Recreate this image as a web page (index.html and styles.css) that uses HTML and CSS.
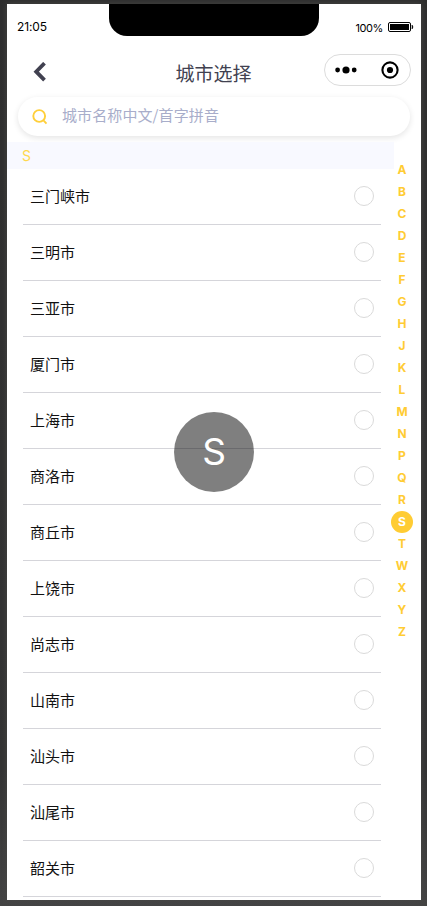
FILE: index.html
```
<!DOCTYPE html>
<html lang="zh-CN">
<head>
<title>城市选择</title>
<meta charset="utf-8">
<link rel="stylesheet" href="styles.css">
</head>
<body>
<div id="phone">
    <div class="status">
        <span class="time">21:05</span>
        <div class="notch"></div>
        <div class="power">
            <span>100%</span>
            <svg width="26" height="10" viewBox="0 0 26 10">
                <rect x="0.5" y="0.5" width="22" height="9" rx="1.5" fill="none" stroke="#000"/>
                <rect x="2" y="2" width="19" height="6" fill="#000"/>
                <path d="M24 3q2 2 0 4z" fill="#000" stroke="#000" stroke-width="0.5"/>
            </svg>
        </div>
    </div>

    <div class="nav">
        <svg class="back" width="14" height="20" viewBox="0 0 14 20">
            <path d="M11.5 1.2L3.2 9.7l8.3 8.5" fill="none" stroke="#414150" stroke-width="3.8"/>
        </svg>
        <h1>城市选择</h1>
        <div class="capsule">
            <svg width="22" height="8" viewBox="0 0 22 8">
                <circle cx="2.6" cy="4" r="2.4"/>
                <circle cx="11" cy="4" r="3.6"/>
                <circle cx="19.2" cy="4" r="2.4"/>
            </svg>
            <svg width="18" height="18" viewBox="0 0 18 18">
                <circle cx="9" cy="9" r="7.6" fill="none" stroke="#000" stroke-width="2.1"/>
                <circle cx="9" cy="9" r="3.1"/>
            </svg>
        </div>
    </div>

    <div class="search">
        <svg width="16" height="16" viewBox="0 0 16 16" fill="none" stroke="#ffcf3a" stroke-width="1.9">
            <circle cx="7.2" cy="7" r="5.9"/>
            <path d="M11.7 11.7l2.8 2.9"/>
        </svg>
        <span>城市名称中文/首字拼音</span>
    </div>

    <div class="content">
        <div class="list">
            <h2>S</h2>
            <ul>
                <li>三门峡市<i></i></li>
                <li>三明市<i></i></li>
                <li>三亚市<i></i></li>
                <li>厦门市<i></i></li>
                <li>上海市<i></i></li>
                <li>商洛市<i></i></li>
                <li>商丘市<i></i></li>
                <li>上饶市<i></i></li>
                <li>尚志市<i></i></li>
                <li>山南市<i></i></li>
                <li>汕头市<i></i></li>
                <li>汕尾市<i></i></li>
                <li>韶关市<i></i></li>
            </ul>
        </div>
        <div class="letters">
            <b>A</b>
            <b>B</b>
            <b>C</b>
            <b>D</b>
            <b>E</b>
            <b>F</b>
            <b>G</b>
            <b>H</b>
            <b>J</b>
            <b>K</b>
            <b>L</b>
            <b>M</b>
            <b>N</b>
            <b>P</b>
            <b>Q</b>
            <b>R</b>
            <b class="current">S</b>
            <b>T</b>
            <b>W</b>
            <b>X</b>
            <b>Y</b>
            <b>Z</b>
        </div>
    </div>

    <div class="toast">S</div>
</div>
</body>
</html>
```
FILE: styles.css
```
* {
    box-sizing: border-box;
}
body {
    margin: 0;
    padding: 4px 6px 6px 7px;
    height: 906px;
    overflow: hidden;
    background: linear-gradient(#2e2e2e, #333 85%, #444);
    font-family: "Liberation Sans", "Noto Sans CJK SC", sans-serif;
}
#phone {
    position: relative;
    width: 414px;
    height: 896px;
    overflow: hidden;
    background: white;
    box-shadow: 0 0 6px #484846;
}

/* status bar */
.status {
    display: flex;
    justify-content: space-between;
    height: 45px;
    font-family: Inter, sans-serif;
}
.time {
    width: 102px;
    padding-left: 10px;
    font-size: 12px;
    line-height: 46px;
    letter-spacing: -0.1px;
}
.notch {
    width: 210px;
    height: 32px;
    background: black;
    border-radius: 0 0 18px 18px;
}
.power {
    display: flex;
    align-items: center;
    justify-content: flex-end;
    gap: 5px;
    width: 102px;
    height: 46px;
    padding-right: 7px;
    font-size: 11px;
    letter-spacing: -0.4px;
}
.power span {
    padding-top: 2px;
}

/* title bar */
.nav {
    display: flex;
    align-items: center;
    height: 48px;
    padding: 0 10px 4px 26px;
}
.back {
    margin-top: 2px;
}
.nav h1 {
    flex: 1;
    margin: 7px 0 0 56px;
    text-align: center;
    font-size: 19px;
    font-weight: normal;
    line-height: 28px;
    color: #414150;
}
.capsule {
    display: flex;
    align-items: center;
    justify-content: space-between;
    width: 87px;
    height: 32px;
    margin-bottom: 2px;
    padding: 0 11px 0 10px;
    border: 1px solid #dcdcdc;
    border-radius: 16px;
}

.search {
    display: flex;
    align-items: center;
    gap: 14px;
    height: 39px;
    margin: 0 11px 6px;
    padding-left: 14px;
    border-radius: 20px;
    box-shadow: 0 2px 6px rgba(0, 0, 0, 0.11);
    font-family: "Noto Sans CJK SC", sans-serif;
    font-size: 15px;
    line-height: 20px;
    letter-spacing: 0.1px;
    color: #a8adca;
}
.search span {
    padding-bottom: 3px;
}

/* cities */
.content {
    display: flex;
}
.list {
    width: 387px;
}
.list h2 {
    height: 27px;
    margin: 0;
    padding-left: 15px;
    background: #f8f9ff;
    font: 14px/27px Inter, sans-serif;
    color: #ffd84d;
}
.list ul {
    margin: 0 13px 0 16px;
    padding: 0;
    list-style: none;
}
.list li {
    display: flex;
    align-items: center;
    justify-content: space-between;
    height: 56px;
    padding: 0 7.5px 2px 7px;
    border-bottom: 1px solid #d5d5da;
    font-size: 15px;
    color: #111;
}
.list i {
    width: 20px;
    height: 20px;
    margin-top: 1px;
    border: 1px solid #dadada;
    border-radius: 50%;
}

/* letter index */
.letters {
    display: flex;
    flex-direction: column;
    width: 22px;
    margin: 17px 0 0 -3px;
}
.letters b {
    height: 22px;
    border-radius: 50%;
    text-align: center;
    font: bold 12px/22px Inter, sans-serif;
    color: #ffcc33;
}
.letters .current {
    background: #ffcc33;
    color: white;
}

/* big letter over the list */
.toast {
    position: absolute;
    top: 408px;
    left: 167px;
    width: 80px;
    height: 80px;
    border-radius: 50%;
    background: rgba(0, 0, 0, 0.5);
    text-align: center;
    font: 37px/79px Inter, sans-serif;
    color: white;
}
```
